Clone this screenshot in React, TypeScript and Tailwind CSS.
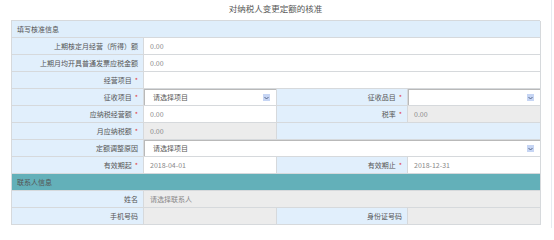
import React from "react";

const font = { fontFamily: '"Noto Sans CJK SC", "Noto Sans", sans-serif' };

function Label({ text, req }: { text: string; req?: boolean }) {
    return (
        <div className="h-[17px] flex items-center justify-end pr-[5px] bg-[#e1effc] border-r border-b border-[#d6d9dc] text-[7px] text-[#555] whitespace-nowrap">
            {text}
            {req && <span className="ml-[3px] text-[#e04040]">*</span>}
        </div>
    );
}

function Value({ text, gray, span }: { text?: string; gray?: boolean; span?: string }) {
    return (
        <div className={`h-[17px] flex items-center pl-[6px] border-r border-b border-[#d6d9dc] text-[7px] text-[#888] ${gray ? "bg-[#ececec]" : "bg-white"} ${span ?? ""}`}>
            {text}
        </div>
    );
}

function Select({ text, span }: { text?: string; span?: string }) {
    return (
        <div className={`h-[17px] bg-white border-r border-b border-[#d6d9dc] ${span ?? ""}`}>
            <div className="h-full flex items-center justify-between pl-[8px] pr-[6px] border-l border-t border-[#b9b9b9] text-[7px] text-[#555]">
                <span>{text}</span>
                <span className="w-[7px] h-[7px] bg-[#c6d5f4] flex items-center justify-center">
                    <svg width="5" height="4" viewBox="0 0 5 4">
                        <path d="M0.5 1 L2.5 3 L4.5 1" fill="none" stroke="#4a5a7a" strokeWidth="0.9" />
                    </svg>
                </span>
            </div>
        </div>
    );
}

function Section({ text, teal }: { text: string; teal?: boolean }) {
    return (
        <div className={`col-span-4 h-[17px] flex items-center pl-[5px] border-r border-b border-[#d6d9dc] text-[7px] text-[#555] ${teal ? "bg-[#63b0b9]" : "bg-[#dfeefb]"}`}>
            {text}
        </div>
    );
}

export default function App() {
    return (
        <div className="w-[554px] h-[228px] bg-white overflow-hidden" style={font}>
            <div className="w-[552px] h-[228px] border-r border-[#e6ebf0]">
                {/* Title */}
                <div className="h-[20px] flex items-start justify-center pt-[2px] text-[8.5px] text-[#555]">
                    对纳税人变更定额的核准
                </div>

                {/* Form table */}
                <div className="ml-[11px] w-[529px] grid grid-cols-[132px_133px_131px_133px] border-t border-l border-[#d6d9dc]">
                    <Section text="填写核准信息" />

                    <Label text="上期核定月经营（所得）额" />
                    <Value text="0.00" span="col-span-3" />

                    <Label text="上期月均开具普通发票应税金额" />
                    <Value text="0.00" span="col-span-3" />

                    <Label text="经营项目" req />
                    <Value span="col-span-3" />

                    <Label text="征收项目" req />
                    <Select text="请选择项目" />
                    <Label text="征收品目" req />
                    <Select />

                    <Label text="应纳税经营额" req />
                    <Value text="0.00" />
                    <Label text="税率" req />
                    <Value text="0.00" gray />

                    <Label text="月应纳税额" req />
                    <Value text="0.00" gray />
                    <div className="col-span-2 h-[17px] bg-[#e1effc] border-r border-b border-[#d6d9dc]" />

                    <Label text="定额调整原因" />
                    <Select text="请选择项目" span="col-span-3" />

                    <Label text="有效期起" req />
                    <Value text="2018-04-01" />
                    <Label text="有效期止" req />
                    <Value text="2018-12-31" />

                    <Section text="联系人信息" teal />

                    <Label text="姓名" />
                    <Value text="请选择联系人" gray span="col-span-3" />

                    <Label text="手机号码" />
                    <Value gray />
                    <Label text="身份证号码" />
                    <Value gray />
                </div>
            </div>
        </div>
    );
}
